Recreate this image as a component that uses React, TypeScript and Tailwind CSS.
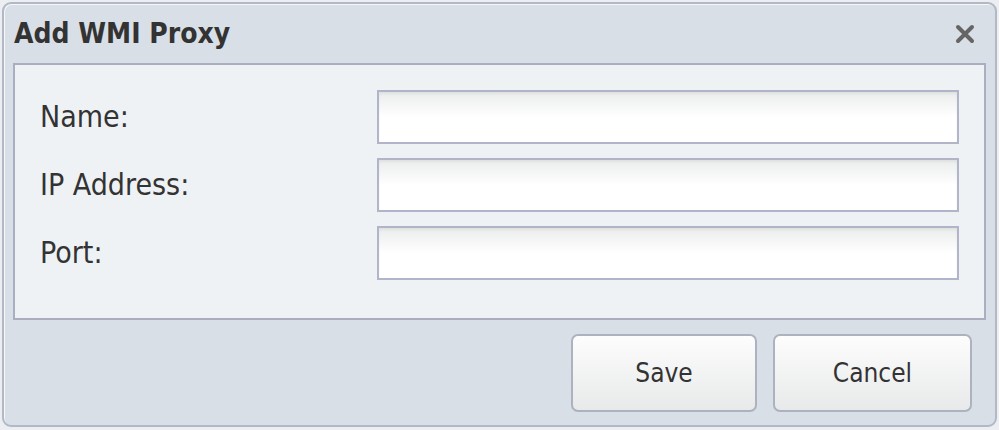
const fields = [
  { id: "name", label: "Name:" },
  { id: "ip", label: "IP Address:" },
  { id: "port", label: "Port:" },
];

function CloseIcon() {
  return (
    <svg width="22" height="22" viewBox="0 0 22 22" className="block">
      <path
        d="M4 4 L18 18 M18 4 L4 18"
        stroke="#656565"
        strokeWidth="4"
        strokeLinecap="round"
        fill="none"
      />
    </svg>
  );
}

export default function App() {
  return (
    <div
      className="w-[999px] h-[430px] bg-[#eceef2] p-[2px]"
      style={{ fontFamily: '"DejaVu Sans Condensed", "DejaVu Sans", Tahoma, sans-serif' }}
    >
      {/* Dialog */}
      <div className="w-[995px] h-[425px] rounded-[9px] border-2 border-[#b2b8c5] bg-[#d9dfe7] shadow-[inset_1px_1px_0_#f4f6f9] flex flex-col">
        {/* Header */}
        <div className="h-[59px] flex items-center justify-between pl-[10px] pr-[19px]">
          <h1 className="text-[28px] font-bold text-[#333333] leading-none">Add WMI Proxy</h1>
          <button className="p-0">
            <CloseIcon />
          </button>
        </div>

        {/* Form panel */}
        <div className="mx-[9px] h-[257px] border-2 border-[#aaaec0] bg-[#eef2f5] pt-[25px] pl-[25px] pr-[25px] flex flex-col gap-[14px]">
          {fields.map((f) => (
            <div key={f.id} className="flex items-center h-[54px]">
              <label htmlFor={f.id} className="w-[337px] text-[30px] text-[#333333] leading-none">
                {f.label}
              </label>
              <input
                id={f.id}
                className="flex-1 h-[54px] border-2 border-[#b2b5c9] bg-gradient-to-b from-[#ebecec] via-white to-white outline-none shadow-[inset_0_2px_3px_rgba(0,0,0,0.05)]"
              />
            </div>
          ))}
        </div>

        {/* Footer */}
        <div className="flex justify-end gap-[16px] pt-[14px] pr-[23px]">
          <button className="w-[186px] h-[78px] rounded-[7px] border-2 border-[#adb2bf] bg-gradient-to-b from-[#fdfdfd] to-[#e8e9ea] text-[26px] text-[#333333]">
            Save
          </button>
          <button className="w-[199px] h-[78px] rounded-[7px] border-2 border-[#adb2bf] bg-gradient-to-b from-[#fdfdfd] to-[#e8e9ea] text-[26px] text-[#333333]">
            Cancel
          </button>
        </div>
      </div>
    </div>
  );
}
